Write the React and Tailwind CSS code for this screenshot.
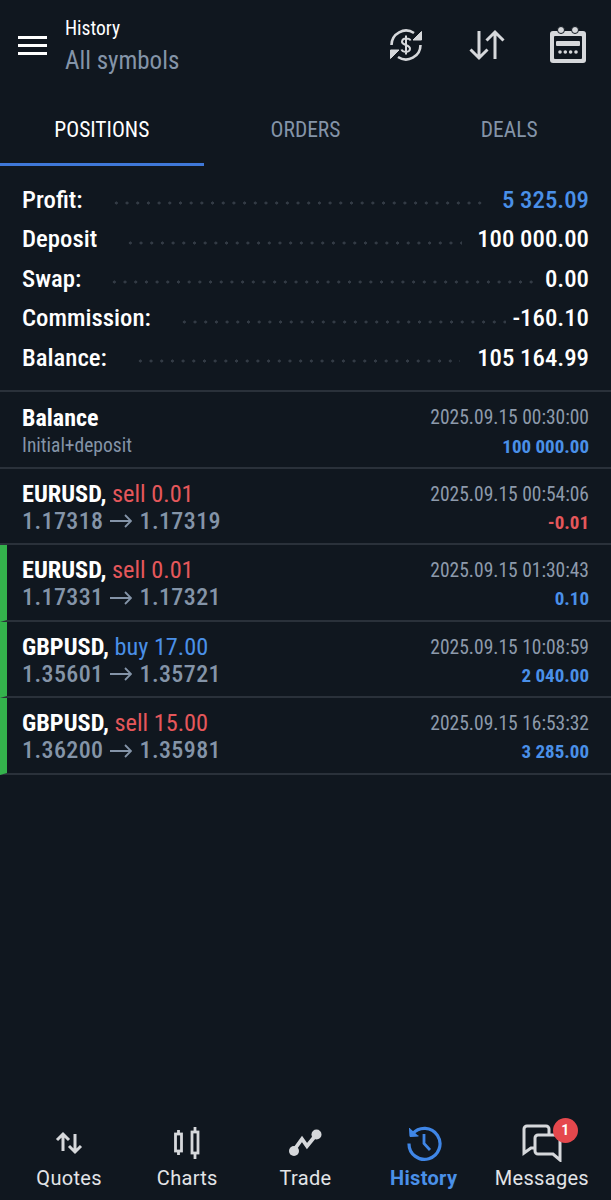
const summary = [
  { label: 'Profit:', value: '5 325.09', color: 'text-[#4a90e8]', right: 'mr-[17px]' },
  { label: 'Deposit', value: '100 000.00', color: 'text-white', right: 'mr-[15px]' },
  { label: 'Swap:', value: '0.00', color: 'text-white', right: 'mr-[11px]' },
  { label: 'Commission:', value: '-160.10', color: 'text-white', right: 'mr-[6px]' },
  { label: 'Balance:', value: '105 164.99', color: 'text-white', right: 'mr-[17px]' },
]

const deals = [
  { symbol: 'EURUSD,', side: 'sell 0.01', sideColor: 'text-[#e5575b]', from: '1.17318', to: '1.17319', time: '2025.09.15 00:54:06', profit: '-0.01', profitColor: 'text-[#e5575b]' },
  { symbol: 'EURUSD,', side: 'sell 0.01', sideColor: 'text-[#e5575b]', from: '1.17331', to: '1.17321', time: '2025.09.15 01:30:43', profit: '0.10', profitColor: 'text-[#4a90e8]', win: true },
  { symbol: 'GBPUSD,', side: 'buy 17.00', sideColor: 'text-[#4a90e8]', from: '1.35601', to: '1.35721', time: '2025.09.15 10:08:59', profit: '2 040.00', profitColor: 'text-[#4a90e8]', win: true },
  { symbol: 'GBPUSD,', side: 'sell 15.00', sideColor: 'text-[#e5575b]', from: '1.36200', to: '1.35981', time: '2025.09.15 16:53:32', profit: '3 285.00', profitColor: 'text-[#4a90e8]', win: true },
]

function SwapIcon() {
  return (
    <svg width="36" height="36" viewBox="0 0 36 36" fill="none" stroke="#d6d8db" strokeWidth="2.6">
      <path d="M3.500 18 A14.500 14.500 0 0 1 26 6" />
      <path d="M32.500 18 A14.500 14.500 0 0 1 10 30" />
      <path d="M33.500 4.500 V13 H25 Z" fill="#d6d8db" strokeWidth="1" />
      <path d="M2.500 31.500 V23 H11 Z" fill="#d6d8db" strokeWidth="1" />
      <path d="M22.500 13.500 C21.500 11 14.500 10.500 14 14.500 C13.500 18.500 22.500 17.500 22 22 C21.500 26 14.500 25.500 13.500 22.500 M18 8.500 V27.500" strokeWidth="2" />
    </svg>
  )
}

function SortIcon() {
  return (
    <svg width="38" height="32" viewBox="0 0 38 32" fill="none" stroke="#d6d8db" strokeWidth="3">
      <path d="M11 2 V29 M2.500 20.500 L11 29 L19.500 20.500" />
      <path d="M27 30 V3 M18.500 11.500 L27 3 L35.500 11.500" />
    </svg>
  )
}

function CalendarIcon() {
  return (
    <svg width="38" height="38" viewBox="0 0 38 38">
      <path d="M4 5 H34 a3 3 0 0 1 3 3 V34 a3 3 0 0 1 -3 3 H4 a3 3 0 0 1 -3 -3 V8 a3 3 0 0 1 3 -3 Z" fill="#d6d8db" />
      <rect x="5" y="10" width="28" height="23" rx="1" fill="#10171f" />
      <circle cx="12" cy="4" r="3.500" fill="#d6d8db" stroke="#10171f" strokeWidth="1" />
      <circle cx="26" cy="4" r="3.500" fill="#d6d8db" stroke="#10171f" strokeWidth="1" />
      <rect x="7" y="15" width="24" height="5" rx="1" fill="#d6d8db" />
      <circle cx="11" cy="26" r="1.800" fill="#d6d8db" />
      <circle cx="16.300" cy="26" r="1.800" fill="#d6d8db" />
      <circle cx="21.600" cy="26" r="1.800" fill="#d6d8db" />
      <circle cx="27" cy="26" r="1.800" fill="#d6d8db" />
    </svg>
  )
}

function QuotesIcon() {
  return (
    <svg width="28" height="24" viewBox="0 0 28 24" fill="none" stroke="#d6d8db" strokeWidth="3">
      <path d="M8 20 V3 M2 9 L8 3 L14 9" />
      <path d="M20 3 V21 M14 15 L20 21 L26 15" />
    </svg>
  )
}

function ChartsIcon() {
  return (
    <svg width="28" height="32" viewBox="0 0 28 32" fill="none" stroke="#d6d8db" strokeWidth="2.800">
      <rect x="2.500" y="7" width="6" height="17" />
      <path d="M5.500 3 V7 M5.500 24 V28" />
      <rect x="19" y="5" width="6" height="21" />
      <path d="M22 0 V5 M22 26 V32" />
    </svg>
  )
}

function TradeIcon() {
  return (
    <svg width="34" height="28" viewBox="0 0 34 28" fill="none" stroke="#d6d8db" strokeWidth="3.800">
      <path d="M6 21 L14 10 L19 17 L28 6" />
      <circle cx="6" cy="22" r="5" fill="#d6d8db" stroke="none" />
      <circle cx="28.500" cy="5.500" r="5" fill="#d6d8db" stroke="none" />
    </svg>
  )
}

function HistoryIcon() {
  return (
    <svg width="36" height="36" viewBox="0 0 36 36" fill="none" stroke="#3f86e6" strokeWidth="3.200">
      <path d="M6.500 9 A15.500 15.500 0 1 1 3 18.500" />
      <path d="M3.500 3 L4 11.500 L12.500 11" fill="#3f86e6" strokeWidth="1" />
      <path d="M18 9 V18.500 L24 25" strokeWidth="2.800" />
    </svg>
  )
}

function MessagesIcon() {
  return (
    <svg width="40" height="38" viewBox="0 0 40 38" fill="none" stroke="#d6d8db" strokeWidth="3">
      <path d="M13 24 H9 L2 29 V5 a3 3 0 0 1 3 -3 H24 a3 3 0 0 1 3 3 V11" />
      <path d="M16 11 H35 a3 3 0 0 1 3 3 V36 L31 30 H16 a3 3 0 0 1 -3 -3 V14 a3 3 0 0 1 3 -3 Z" />
    </svg>
  )
}

function PriceArrow() {
  return (
    <svg className="mx-[7px] inline-block" width="22" height="14" viewBox="0 0 22 14" fill="none" stroke="#8494a8" strokeWidth="1.800">
      <path d="M0 7 H21 M15 1 L21 7 L15 13" />
    </svg>
  )
}

const nav = [
  { label: 'Quotes', icon: <QuotesIcon /> },
  { label: 'Charts', icon: <ChartsIcon /> },
  { label: 'Trade', icon: <TradeIcon /> },
  { label: 'History', icon: <HistoryIcon />, active: true },
  { label: 'Messages', icon: <MessagesIcon />, badge: '1' },
]

function DealRow({ deal }) {
  return (
    <div className={`flex h-[76.500px] justify-between border-b-2 border-[#2a313a] pr-[22px] ${deal.win ? 'border-l-[7px] border-l-[#34b24c] pl-[15px]' : 'pl-[22px]'}`}>
      <div className="pt-[10px]">
        <div className="text-[24.300px] leading-[29px] [font-stretch:75%]">
          <span className="font-bold text-white">{deal.symbol}</span>{' '}
          <span className={deal.sideColor}>{deal.side}</span>
        </div>
        <div className="flex items-center text-[24px] leading-[27px] font-medium tracking-[0.4px] text-[#8494a8] [font-stretch:75%]">
          {deal.from}
          <PriceArrow />
          {deal.to}
        </div>
      </div>
      <div className="pt-[12px] text-right">
        <div className="text-[19.500px] leading-[28px] text-[#8d9aab] [font-stretch:75%]">{deal.time}</div>
        <div className={`text-[19px] leading-[28px] font-bold [font-stretch:75%] ${deal.profitColor}`}>{deal.profit}</div>
      </div>
    </div>
  )
}

export default function App() {
  return (
    <div className="flex h-[1200px] flex-col overflow-hidden bg-[#10171f] font-['Roboto',sans-serif]">
      <header className="flex h-[90px] items-center pr-[24px] pl-[18px]">
        <div className="flex h-[19px] w-[29px] flex-col justify-between">
          <span className="h-[3px] bg-white" />
          <span className="h-[3px] bg-white" />
          <span className="h-[3px] bg-white" />
        </div>
        <div className="ml-[18px] flex-1 pt-[5px]">
          <div className="text-[19.500px] leading-[24px] text-white [font-stretch:75%]">History</div>
          <div className="pt-[2px] text-[25px] leading-[36px] text-[#8494a8] [font-stretch:75%]">All symbols</div>
        </div>
        <div className="flex items-center">
          <SwapIcon />
          <div className="ml-[44px]"><SortIcon /></div>
          <div className="ml-[43px]"><CalendarIcon /></div>
        </div>
      </header>

      <nav className="grid h-[76px] grid-cols-3 text-center text-[21.500px] [font-stretch:75%]">
        <div className="flex items-center justify-center border-b-[3px] border-[#3f78d8] pt-[8px] text-white">POSITIONS</div>
        <div className="flex items-center justify-center border-b-[3px] border-transparent pt-[8px] text-[#8494a8]">ORDERS</div>
        <div className="flex items-center justify-center border-b-[3px] border-transparent pt-[8px] text-[#8494a8]">DEALS</div>
      </nav>

      <section className="flex h-[226px] flex-col border-b-2 border-[#2a313a] px-[22px] pt-[13.500px]">
        {summary.map((row) => (
          <div key={row.label} className="flex h-[39.500px] items-center text-[24.800px] font-medium text-white [font-stretch:75%]">
            <span>{row.label}</span>
            <span className={`mt-[8px] ml-[28px] h-[4px] flex-1 bg-[radial-gradient(circle,#333b45_1.400px,transparent_1.700px)] bg-[length:10.700px_4px] ${row.right}`} />
            <span className={row.color}>{row.value}</span>
          </div>
        ))}
      </section>

      <div className="flex h-[76.500px] justify-between border-b-2 border-[#2a313a] px-[22px]">
        <div className="pt-[11px]">
          <div className="text-[24px] leading-[30px] font-bold text-white [font-stretch:75%]">Balance</div>
          <div className="text-[19.500px] leading-[26px] text-[#8494a8] [font-stretch:75%]">Initial+deposit</div>
        </div>
        <div className="pt-[12px] text-right">
          <div className="text-[19.500px] leading-[28px] text-[#8d9aab] [font-stretch:75%]">2025.09.15 00:30:00</div>
          <div className="text-[19px] leading-[29px] font-bold text-[#4a90e8] [font-stretch:75%]">100 000.00</div>
        </div>
      </div>

      {deals.map((deal) => (
        <DealRow key={deal.time} deal={deal} />
      ))}

      <footer className="mt-auto grid h-[80px] grid-cols-5 px-[10px]">
        {nav.map((item) => (
          <div key={item.label} className="flex flex-col items-center">
            <div className="relative flex h-[46px] items-center justify-center">
              {item.icon}
              {item.badge && (
                <span className="absolute -top-[2px] -right-[16px] flex h-[25px] w-[25px] items-center justify-center rounded-full bg-[#e5484d] text-[14px] font-bold text-white">
                  {item.badge}
                </span>
              )}
            </div>
            <span className={`text-[20px] leading-[24px] tracking-[0.3px] ${item.active ? 'font-bold text-[#4a90e8]' : 'text-[#e2e4e7]'}`}>
              {item.label}
            </span>
          </div>
        ))}
      </footer>
    </div>
  )
}
